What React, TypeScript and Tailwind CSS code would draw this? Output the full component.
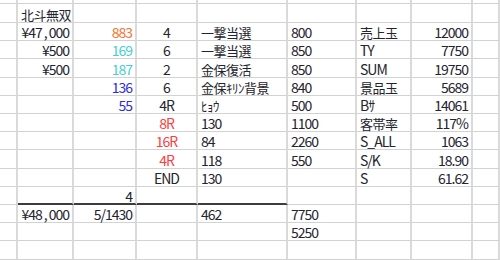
import type { ReactNode } from "react";

type Cell = {
  t?: ReactNode;
  a?: "l" | "r" | "c";
  c?: string;
  j?: boolean;
};

type Row = { h: string; cells: Cell[]; thick?: boolean };

const colW = [
  "w-[18px]",
  "w-[56px]",
  "w-[63px]",
  "w-[61px]",
  "w-[90px]",
  "w-[69px]",
  "w-[55px]",
  "w-[61px]",
  "flex-1",
];

const ORANGE = "text-[#f5752f]";
const CYAN = "text-[#48cfcf]";
const BLUE = "text-[#2b2bdf]";
const RED = "text-[#ff3d3d]";

function Yen({ v }: { v: string }) {
  const [a, b] = v.split(",");
  return (
    <>
      {a}
      <span className="inline-block w-[7px] text-center">,</span>
      {b}
    </>
  );
}

const rows: Row[] = [
  { h: "h-[4px]", cells: [] },
  { h: "h-[19px]", cells: [{}, { t: "北斗無双", a: "l", j: true }] },
  {
    h: "h-[18px]",
    cells: [
      {},
      { t: <Yen v="¥47,000" />, a: "r" },
      { t: "883", a: "r", c: ORANGE },
      { t: "4", a: "c" },
      { t: "一撃当選", j: true },
      { t: "800" },
      { t: "売上玉", j: true },
      { t: "12000", a: "r" },
    ],
  },
  {
    h: "h-[18px]",
    cells: [
      {},
      { t: "¥500", a: "r" },
      { t: "169", a: "r", c: CYAN },
      { t: "6", a: "c" },
      { t: "一撃当選", j: true },
      { t: "850" },
      { t: "TY" },
      { t: "7750", a: "r" },
    ],
  },
  {
    h: "h-[19px]",
    cells: [
      {},
      { t: "¥500", a: "r" },
      { t: "187", a: "r", c: CYAN },
      { t: "2", a: "c" },
      { t: "金保復活", j: true },
      { t: "850" },
      { t: "SUM" },
      { t: "19750", a: "r" },
    ],
  },
  {
    h: "h-[18px]",
    cells: [
      {},
      {},
      { t: "136", a: "r", c: BLUE },
      { t: "6", a: "c" },
      { t: "金保ｷﾘﾝ背景", j: true },
      { t: "840" },
      { t: "景品玉", j: true },
      { t: "5689", a: "r" },
    ],
  },
  {
    h: "h-[18px]",
    cells: [
      {},
      {},
      { t: "55", a: "r", c: BLUE },
      { t: "4R", a: "c" },
      { t: "ﾋｮｳ", j: true },
      { t: "500" },
      { t: "Bｻ" },
      { t: "14061", a: "r" },
    ],
  },
  {
    h: "h-[18px]",
    cells: [
      {},
      {},
      {},
      { t: "8R", a: "c", c: RED },
      { t: "130" },
      { t: "1100" },
      { t: "客帯率", j: true },
      { t: "117%", a: "r" },
    ],
  },
  {
    h: "h-[18px]",
    cells: [
      {},
      {},
      {},
      { t: "16R", a: "c", c: RED },
      { t: "84" },
      { t: "2260" },
      { t: "S_ALL" },
      { t: "1063", a: "r" },
    ],
  },
  {
    h: "h-[19px]",
    cells: [
      {},
      {},
      {},
      { t: "4R", a: "c", c: RED },
      { t: "118" },
      { t: "550" },
      { t: "S/K" },
      { t: "18.90", a: "r" },
    ],
  },
  {
    h: "h-[18px]",
    cells: [
      {},
      {},
      {},
      { t: "END", a: "c" },
      { t: "130" },
      {},
      { t: "S" },
      { t: "61.62", a: "r" },
    ],
  },
  { h: "h-[18px]", thick: true, cells: [{}, {}, { t: "4", a: "r" }] },
  {
    h: "h-[18px]",
    cells: [
      {},
      { t: <Yen v="¥48,000" />, a: "r" },
      { t: "5/1430", a: "r" },
      {},
      { t: "462" },
      { t: "7750" },
    ],
  },
  { h: "h-[18px]", cells: [{}, {}, {}, {}, {}, { t: "5250" }] },
  { h: "h-[19px]", cells: [] },
  { h: "h-[10px]", cells: [] },
];

const alignCls = { l: "justify-start pl-[3px]", r: "justify-end pr-[3px]", c: "justify-center" };

export default function App() {
  return (
    <div className="h-[260px] w-[500px] overflow-hidden bg-white font-['Noto_Sans_CJK_JP',sans-serif] text-[#24242e]">
      {rows.map((row, ri) => (
        <div key={ri} className={`flex ${row.h}`}>
          {colW.map((w, ci) => {
            const cell = row.cells[ci] ?? {};
            const thick = row.thick && ci >= 1 && ci <= 4;
            return (
              <div
                key={ci}
                className={`flex shrink-0 items-center whitespace-nowrap border-r-2 border-r-[#dadada] ${
                  thick ? "border-b-2 border-b-[#3c3c3c]" : "border-b border-b-[#d2d2d2]"
                } ${w} ${alignCls[cell.a ?? "l"]} ${cell.c ?? ""}`}
              >
                {cell.t !== undefined && (
                  <span
                    className={`translate-y-px leading-[15px] ${
                      cell.j ? "text-[13px] tracking-[-0.5px]" : "text-[14px] tracking-[-1px]"
                    }`}
                  >
                    {cell.t}
                  </span>
                )}
              </div>
            );
          })}
        </div>
      ))}
    </div>
  );
}
